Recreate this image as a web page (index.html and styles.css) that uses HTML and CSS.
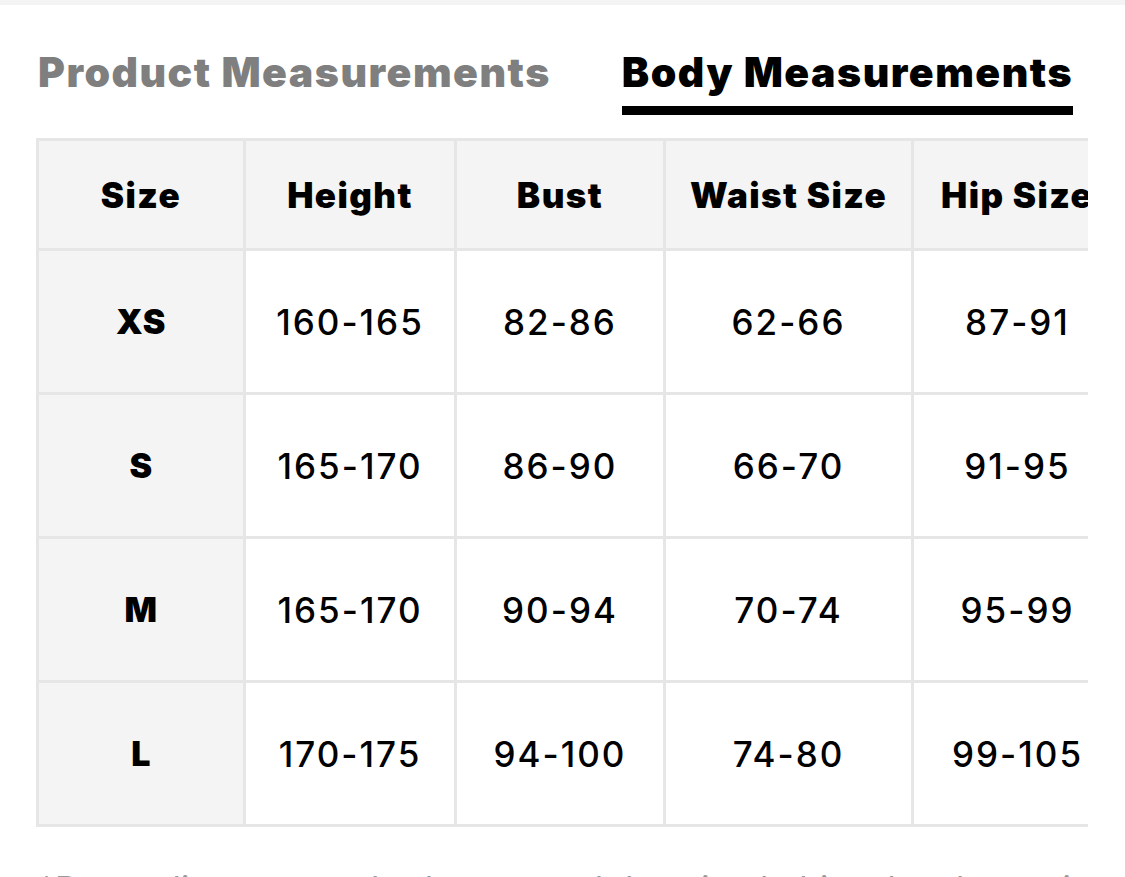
FILE: index.html
```html
<!DOCTYPE html>
<html>
<head>
<meta charset="utf-8">
<link rel="stylesheet" href="styles.css">
</head>
<body>
<div class="topband"></div>
<div class="tabs">
  <div class="tab">Product Measurements</div>
  <div class="tab active">Body Measurements</div>
</div>
<div class="scroll">
  <table class="chart">
    <colgroup>
      <col class="c1"><col class="c2"><col class="c3"><col class="c4"><col class="c5">
    </colgroup>
    <thead>
      <tr><th>Size</th><th>Height</th><th>Bust</th><th>Waist Size</th><th class="last">Hip Size</th></tr>
    </thead>
    <tbody>
      <tr><td class="first">XS</td><td>160-165</td><td>82-86</td><td>62-66</td><td>87-91</td></tr>
      <tr><td class="first">S</td><td>165-170</td><td>86-90</td><td>66-70</td><td>91-95</td></tr>
      <tr><td class="first">M</td><td>165-170</td><td>90-94</td><td>70-74</td><td>95-99</td></tr>
      <tr><td class="first">L</td><td>170-175</td><td>94-100</td><td>74-80</td><td>99-105</td></tr>
    </tbody>
  </table>
</div>
<p class="note">*Depending on your body type and dressing habits, the above sizes are for reference only.</p>
</body>
</html>
```

FILE: styles.css
```css
html, body {
  margin: 0;
  padding: 0;
  background: #ffffff;
  font-family: Inter, "Noto Sans", "Liberation Sans", sans-serif;
  color: #000;
  overflow: hidden;
}
.topband {
  height: 5px;
  background: #f4f4f4;
}
.tabs {
  display: flex;
  gap: 71px;
  padding: 42px 0 0 38px;
  height: 91px;
  box-sizing: content-box;
}
.tab {
  font-size: 41px;
  font-weight: 900;
  color: #7f7f7f;
  line-height: 50px;
  letter-spacing: 1.5px;
  height: 66px;
  white-space: nowrap;
}
.tab.active {
  color: #000;
  border-bottom: 9px solid #000;
  height: 59px;
  letter-spacing: 1.5px;
}
.scroll {
  margin-left: 36px;
  width: 1052px;
  overflow: hidden;
}
.chart {
  border-collapse: separate;
  border-spacing: 0;
  table-layout: fixed;
  width: 1085px;
  border-top: 3px solid #e6e6e6;
  border-left: 3px solid #e6e6e6;
}
.c1 { width: 207px; }
.c2 { width: 211px; }
.c3 { width: 209px; }
.c4 { width: 248px; }
.c5 { width: 210px; }
.chart th, .chart td {
  border-right: 3px solid #e6e6e6;
  border-bottom: 3px solid #e6e6e6;
  text-align: center;
  vertical-align: middle;
  padding: 0;
  white-space: nowrap;
}
.chart th {
  height: 107px;
  background: #f4f4f4;
  font-size: 35px;
  font-weight: 900;
  letter-spacing: 1.4px;
}
.chart th.last {
  text-align: left;
  padding-left: 27px;
}
.chart td {
  height: 141px;
  font-size: 35px;
  font-weight: 500;
  letter-spacing: 2px;
}
.chart td.first {
  background: #f4f4f4;
  font-weight: 900;
  font-size: 34px;
  letter-spacing: 0.5px;
}
.note {
  margin: 41px 0 0 38px;
  font-size: 34px;
  color: #999;
  white-space: nowrap;
}
```
